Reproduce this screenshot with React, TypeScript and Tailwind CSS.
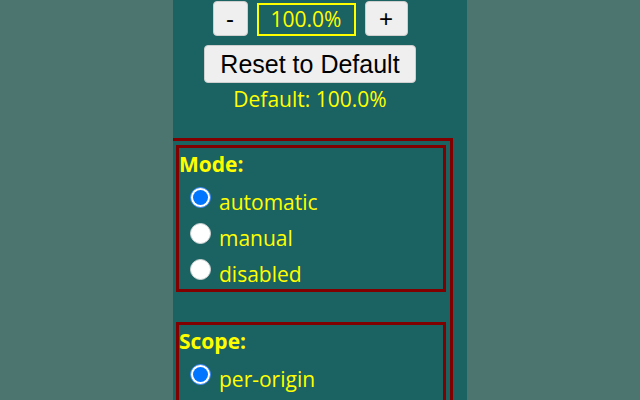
import React from "react";

const label = { fontFamily: '"Open Sans", "Noto Sans", sans-serif' } as const;
const arial = { fontFamily: '"Liberation Sans", Arial, sans-serif' } as const;

function Radio({ checked }: { checked?: boolean }) {
  if (checked) {
    return (
      <div className="mt-[6px] ml-[11px] w-[21px] h-[21px] shrink-0 rounded-full border border-[#2f86ff] bg-white p-[2px]">
        <div className="w-full h-full rounded-full bg-[#0075ff]" />
      </div>
    );
  }
  return (
    <div className="mt-[6px] ml-[11px] w-[21px] h-[21px] shrink-0 rounded-full border border-[#cfd4d4] bg-white" />
  );
}

function Row({ text, checked }: { text?: string; checked?: boolean }) {
  return (
    <div className="h-[36px] flex items-start">
      <Radio checked={checked} />
      {text ? (
        <span className="ml-[8px] text-[21px] leading-[42px] text-[#ffff00]" style={label}>
          {text}
        </span>
      ) : null}
    </div>
  );
}

function Group({ title, items }: { title: string; items: { t?: string; c?: boolean }[] }) {
  return (
    <div className="w-[270px] border-[3px] border-[#800000]">
      <div className="h-[33px] text-[21px] leading-[33px] font-bold text-[#ffff00]" style={label}>
        {title}
      </div>
      {items.map((it, i) => (
        <Row key={i} text={it.t} checked={it.c} />
      ))}
    </div>
  );
}

export default function App() {
  return (
    <div className="w-[640px] h-[400px] bg-[#4c756f] flex overflow-hidden">
      <div className="ml-[173px] w-[294px] h-[400px] bg-[#1b6262] overflow-hidden">
        <div className="w-[274px] flex flex-col items-center pt-[1px]">
          <div className="flex items-end gap-[9px]">
            <button
              className="w-[35px] h-[35px] bg-[#efefef] border border-[#cfcfcf] rounded-[4px] text-[24px] leading-[33px] text-black"
              style={arial}
            >
              -
            </button>
            <div
              className="w-[99px] h-[33px] border-2 border-[#ffff00] text-[21px] leading-[29px] text-center text-[#ffff00]"
              style={label}
            >
              100.0%
            </div>
            <button
              className="w-[43px] h-[35px] bg-[#efefef] border border-[#cfcfcf] rounded-[4px] text-[24px] leading-[33px] text-black"
              style={arial}
            >
              +
            </button>
          </div>
          <button
            className="mt-[9px] w-[212px] h-[38px] bg-[#efefef] border border-[#cfcfcf] rounded-[4px] text-[25px] leading-[36px] text-black"
            style={arial}
          >
            Reset to Default
          </button>
          <div className="mt-[2px] h-[28px] text-[21px] leading-[28px] text-[#ffff00]" style={label}>
            Default: 100.0%
          </div>
        </div>
        <div className="mt-[25px] ml-[-4px] w-[284px] border-[3px] border-[#800000] p-[4px] flex flex-col gap-[30px]">
          <Group
            title="Mode:"
            items={[{ t: "automatic", c: true }, { t: "manual" }, { t: "disabled" }]}
          />
          <Group title="Scope:" items={[{ t: "per-origin", c: true }, {}]} />
        </div>
      </div>
    </div>
  );
}
